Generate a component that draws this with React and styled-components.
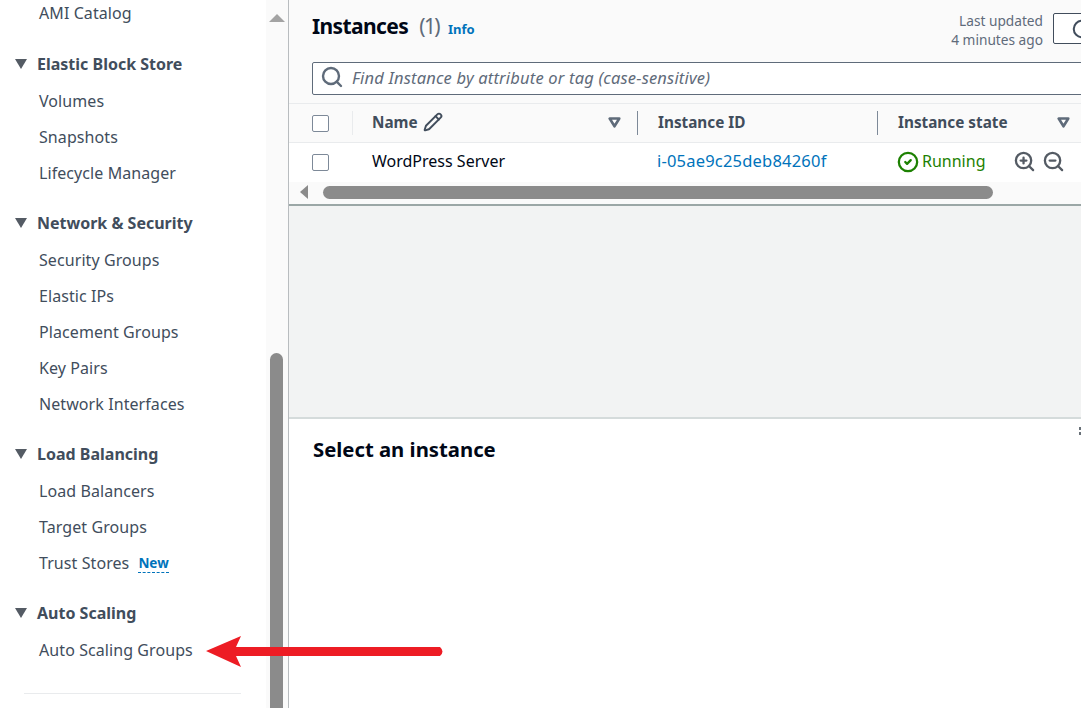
import React from 'react';
import styled, { createGlobalStyle } from 'styled-components';
import { Search, Pencil, CircleCheck, ZoomIn, ZoomOut, RotateCw } from 'lucide-react';

const GlobalStyle = createGlobalStyle`
    html, body {
        margin: 0;
        padding: 0;
        background: #fff;
    }
    body {
        font-family: "Noto Sans", "Open Sans", sans-serif;
        font-size: 16px;
        color: #000716;
    }
`;

const Page = styled.div`
    position: relative;
    width: 1081px;
    height: 708px;
    overflow: hidden;
    display: flex;
`;

const Sidebar = styled.nav`
    position: relative;
    flex: 0 0 288px;
    height: 100%;
    overflow: hidden;
    border-right: 1px solid #b8bcbf;
    box-sizing: content-box;
    background: linear-gradient(to right, #fff 266px, #fafafa 266px);
`;

const NavScroll = styled.div`
    margin-top: -5px;
    width: 226px;
    padding-left: 15px;
`;

const NavGroup = styled.div`
    margin-bottom: ${(p) => p.$gap || 13}px;
`;

const NavHeading = styled.div`
    display: flex;
    align-items: center;
    gap: 10px;
    height: 38px;
    font-weight: 700;
    font-size: 16px;
    color: #414d5c;
`;

const NavLink = styled.div`
    display: flex;
    align-items: center;
    height: 36px;
    padding-left: 24px;
    font-size: 16px;
    letter-spacing: 0.08px;
    color: #414d5c;
`;

const NewBadge = styled.span`
    margin: 2px 0 0 9px;
    font-size: 13.5px;
    font-weight: 700;
    letter-spacing: 0;
    line-height: 17px;
    color: #0073bb;
    border-bottom: 1px dashed #0073bb;
`;

const NavDivider = styled.div`
    height: 1px;
    margin: 25px 0 0 9px;
    background: #e9ebed;
`;

const ScrollThumb = styled.div`
    position: absolute;
    left: 270px;
    top: 353px;
    width: 13px;
    height: 380px;
    border-radius: 7px 7px 0 0;
    background: #8b8b8b;
`;

const ScrollUp = styled.div`
    position: absolute;
    left: 269px;
    top: 14px;
    width: 0;
    height: 0;
    border-left: 8px solid transparent;
    border-right: 8px solid transparent;
    border-bottom: 8px solid #a3a3a3;
`;

const Main = styled.main`
    flex: 1;
    min-width: 0;
    display: flex;
    flex-direction: column;
    overflow: hidden;
`;

const ListPane = styled.section`
    background: #fafafa;
    border-bottom: 2px solid #9ba7a6;
`;

const TitleBar = styled.div`
    display: flex;
    justify-content: space-between;
    height: 62px;
    padding-left: 23px;
`;

const TitleGroup = styled.div`
    display: flex;
    align-items: baseline;
    padding-top: 10px;
`;

const Title = styled.h1`
    margin: 0;
    font-size: 21px;
    line-height: 32px;
    font-weight: 700;
    letter-spacing: -0.6px;
    color: #000716;
`;

const Count = styled.span`
    margin-left: 11px;
    font-weight: 400;
    letter-spacing: -1.6px;
    color: #5f6b7a;
`;

const InfoLink = styled.a`
    margin-left: 9px;
    font-size: 13px;
    font-weight: 700;
    color: #0073bb;
`;

const Updated = styled.div`
    display: flex;
    gap: 10px;
    padding-top: 13px;
    margin-right: -38px;
`;

const UpdatedText = styled.div`
    margin-top: -2px;
    text-align: right;
    font-size: 13.7px;
    line-height: 19px;
    color: #5f6b7a;
`;

const RefreshButton = styled.div`
    width: 66px;
    height: 31px;
    display: flex;
    align-items: center;
    padding-left: 17px;
    box-sizing: border-box;
    border: 1px solid #414d5c;
    border-radius: 2px;
    background: #fff;
    color: #414d5c;
`;

const SearchBox = styled.div`
    display: flex;
    align-items: center;
    gap: 8px;
    width: 820px;
    height: 33px;
    margin-left: 23px;
    padding: 0 0 3px 7px;
    box-sizing: border-box;
    background: #fff;
    border: 1px solid #5f6b7a;
    border-radius: 2px;
    font-size: 16.5px;
    letter-spacing: 0.18px;
    font-style: italic;
    color: #5f6b7a;
`;

const HeaderRow = styled.div`
    display: grid;
    grid-template-columns: 63px 285px 240px 1fr;
    align-items: center;
    height: 40px;
    box-sizing: border-box;
    margin-top: 8px;
    background: #fafafa;
    border-top: 1px solid #e9ebed;
    border-bottom: 1px solid #e9ebed;
`;

const HeaderCell = styled.div`
    display: flex;
    align-items: center;
    justify-content: space-between;
    height: 24px;
    padding: 0 ${(p) => p.$right || 16}px 2px ${(p) => p.$pad || 20}px;
    box-sizing: border-box;
    border-left: 1px solid ${(p) => (p.$light ? '#e9ebed' : '#7d8998')};
    font-size: 15.3px;
    font-weight: 700;
    color: #414d5c;
`;

const HeaderLabel = styled.span`
    display: flex;
    align-items: center;
    gap: 5px;
`;

const CheckCell = styled.div`
    padding-left: 23px;
    display: flex;
    align-items: center;
`;

const Checkbox = styled.span`
    display: block;
    width: 15px;
    height: 15px;
    border: 1px solid #7d8998;
    border-radius: 2px;
    background: #fff;
`;

const NavCaret = styled.span`
    display: block;
    width: 0;
    height: 0;
    border-left: 6px solid transparent;
    border-right: 6px solid transparent;
    border-top: 10px solid #545b64;
`;

const FilterCaret = () => (
    <svg width="13" height="11" viewBox="0 0 13 11">
        <path d="M1.7 1.5 H11.3 L6.5 9.3 Z" fill="#fff" stroke="#5f6b7a" strokeWidth="2.6" strokeLinejoin="round" />
    </svg>
);

const DataRow = styled.div`
    display: grid;
    grid-template-columns: 63px 285px 240px 1fr;
    align-items: center;
    height: 39px;
    box-sizing: border-box;
    padding-bottom: 1px;
    background: #fff;
    font-size: 16px;
`;

const DataCell = styled.div`
    padding: 0 0 3px 20px;
`;

const IdLink = styled.a`
    font-size: 16.5px;
    letter-spacing: 0.2px;
    color: #0073bb;
`;

const StateCell = styled.div`
    display: flex;
    align-items: center;
    padding-left: 20px;
    color: #1d8102;
`;

const StateText = styled.span`
    margin-left: 3px;
    padding-bottom: 3px;
`;

const ZoomIcons = styled.span`
    display: flex;
    gap: 6px;
    margin: -2px 0 0 28px;
    color: #545b64;
`;

const HScroll = styled.div`
    display: flex;
    align-items: center;
    height: 22px;
    box-sizing: border-box;
    padding-bottom: 2px;
    background: #fafafa;
`;

const HArrow = styled.span`
    display: block;
    width: 0;
    height: 0;
    margin-left: 11px;
    border-top: 7px solid transparent;
    border-bottom: 7px solid transparent;
    border-right: 8px solid #8b8b8b;
`;

const HThumb = styled.span`
    display: block;
    width: 670px;
    height: 13px;
    margin-left: 15px;
    border-radius: 7px;
    background: #8b8b8b;
`;

const Gutter = styled.div`
    height: 211px;
    background: #f2f3f3;
    border-bottom: 2px solid #d5dbdb;
`;

const DetailPane = styled.section`
    position: relative;
    flex: 1;
    background: #fff;
    padding: 16px 24px;
`;

const DetailTitle = styled.h2`
    margin: 0;
    font-size: 20.3px;
    line-height: 28px;
    font-weight: 700;
    color: #000716;
`;

const Grabber = styled.span`
    position: absolute;
    top: 8px;
    right: 0;
    width: 2px;
    height: 8px;
    border-top: 3px solid #687078;
    border-bottom: 3px solid #687078;
    box-sizing: border-box;
`;

const Annotation = styled.svg`
    position: absolute;
    left: 200px;
    top: 630px;
`;

const navGroups = [
    { title: 'Elastic Block Store', links: ['Volumes', 'Snapshots', 'Lifecycle Manager'] },
    { title: 'Network & Security', links: ['Security Groups', 'Elastic IPs', 'Placement Groups', 'Key Pairs', 'Network Interfaces'] },
    { title: 'Load Balancing', links: ['Load Balancers', 'Target Groups', 'Trust Stores'] },
    { title: 'Auto Scaling', links: ['Auto Scaling Groups'] },
];

const App = () => {
    return (
        <Page>
            <GlobalStyle />
            <Sidebar>
                <NavScroll>
                    <NavGroup $gap={14}>
                        <NavLink>AMI Catalog</NavLink>
                    </NavGroup>
                    {navGroups.map((group) => (
                        <NavGroup key={group.title}>
                            <NavHeading>
                                <NavCaret />
                                {group.title}
                            </NavHeading>
                            {group.links.map((link) => (
                                <NavLink key={link}>
                                    {link}
                                    {link === 'Trust Stores' && <NewBadge>New</NewBadge>}
                                </NavLink>
                            ))}
                        </NavGroup>
                    ))}
                    <NavDivider />
                </NavScroll>
                <ScrollUp />
                <ScrollThumb />
            </Sidebar>
            <Main>
                <ListPane>
                    <TitleBar>
                        <TitleGroup>
                            <Title>Instances<Count>(1)</Count></Title>
                            <InfoLink>Info</InfoLink>
                        </TitleGroup>
                        <Updated>
                            <UpdatedText>Last updated<br />4 minutes ago</UpdatedText>
                            <RefreshButton><RotateCw size={22} strokeWidth={2.2} /></RefreshButton>
                        </Updated>
                    </TitleBar>
                    <SearchBox>
                        <Search size={24} strokeWidth={2.4} color="#5f6b7a" />
                        Find Instance by attribute or tag (case-sensitive)
                    </SearchBox>
                    <HeaderRow>
                        <CheckCell><Checkbox /></CheckCell>
                        <HeaderCell $light $pad={19}>
                            <HeaderLabel>Name <Pencil size={20} strokeWidth={2.3} /></HeaderLabel>
                            <FilterCaret />
                        </HeaderCell>
                        <HeaderCell>Instance ID</HeaderCell>
                        <HeaderCell $right={11}>Instance state<FilterCaret /></HeaderCell>
                    </HeaderRow>
                    <DataRow>
                        <CheckCell><Checkbox /></CheckCell>
                        <DataCell>WordPress Server</DataCell>
                        <DataCell><IdLink>i-05ae9c25deb84260f</IdLink></DataCell>
                        <StateCell>
                            <CircleCheck size={22} strokeWidth={2.5} />
                            <StateText>Running</StateText>
                            <ZoomIcons>
                                <ZoomIn size={23} strokeWidth={2.4} />
                                <ZoomOut size={23} strokeWidth={2.4} />
                            </ZoomIcons>
                        </StateCell>
                    </DataRow>
                    <HScroll>
                        <HArrow />
                        <HThumb />
                    </HScroll>
                </ListPane>
                <Gutter />
                <DetailPane>
                    <DetailTitle>Select an instance</DetailTitle>
                    <Grabber />
                </DetailPane>
            </Main>
            <Annotation width="250" height="45" viewBox="0 0 250 45">
                <path d="M6 21 L41 6 L36 17 L240 17 Q245 21.500 240 26 L36 26 L41 37 Z" fill="#ed1c24" />
            </Annotation>
        </Page>
    );
};

export default App;
